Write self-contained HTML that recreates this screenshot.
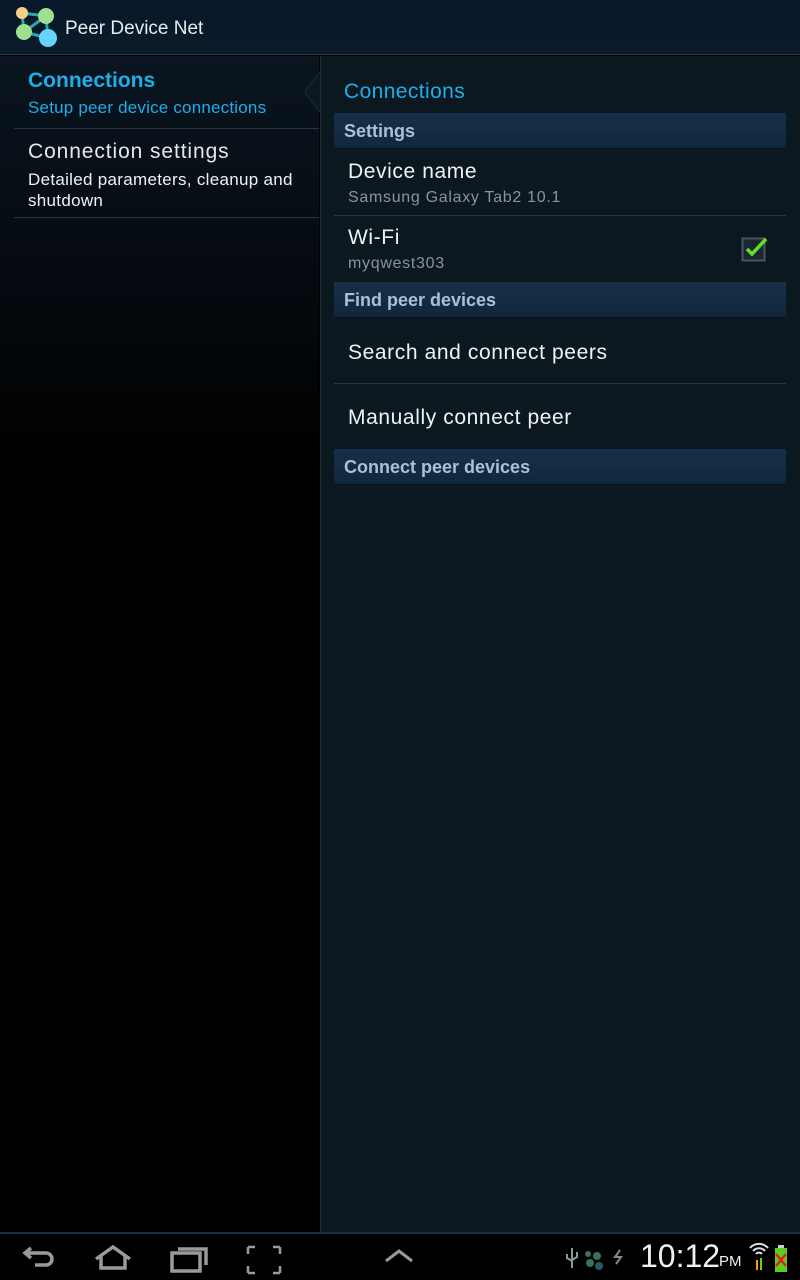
<!DOCTYPE html>
<html><head><meta charset="utf-8"><style>
*{margin:0;padding:0;box-sizing:border-box}
body{width:800px;height:1280px;background:#000;font-family:"Liberation Sans",Roboto,sans-serif;position:relative;overflow:hidden}
.abs{position:absolute}
#top{left:0;top:0;width:800px;height:55px;background:linear-gradient(#06182a,#0a1a28);border-bottom:1px solid #2a3a48}
#left{left:0;top:56px;width:319px;height:1176px;background:linear-gradient(#0a1520 0,#050a10 220px,#000 400px)}
#right{left:320px;top:56px;width:480px;height:1176px;background:#0b1820;border-left:1px solid #1f2c36}
.t{position:absolute;white-space:nowrap}
.r{letter-spacing:0.6px}
.s{letter-spacing:0.7px}
.hdr{position:absolute;left:334px;width:452px;height:36px;background:linear-gradient(#163049,#10273b);border-bottom:1px solid #081018}
.hdr span{position:absolute;left:10px;top:8px;font-size:18px;font-weight:bold;color:#a9c0d6}
.sep{position:absolute;height:1px;background:#26353f}
#nav{left:0;top:1232px;width:800px;height:48px;background:#000;border-top:2px solid #12303f}
</style></head><body>
<div id="top" class="abs">
<svg class="abs" style="left:14px;top:5px" width="46" height="44" viewBox="0 0 46 44">
<g stroke="#2aa8b0" stroke-width="3"><line x1="8" y1="8" x2="32" y2="11"/><line x1="8" y1="8" x2="10" y2="27"/><line x1="10" y1="27" x2="32" y2="11"/><line x1="32" y1="11" x2="34" y2="33"/><line x1="10" y1="27" x2="34" y2="33"/></g>
<circle cx="8" cy="8" r="6" fill="#f4d08a"/><circle cx="32" cy="11" r="8" fill="#9ee08e"/><circle cx="10" cy="27" r="8" fill="#9ee08e"/><circle cx="34" cy="33" r="9" fill="#66d4fa"/></svg>
<div class="t" style="left:65px;top:18px;font-size:19px;color:#e6ecf0">Peer Device Net</div>
</div>
<div id="left" class="abs">
<div class="t" style="left:28px;top:13px;font-size:21px;font-weight:bold;color:#1eaee8">Connections</div>
<div class="t" style="left:28px;top:42px;font-size:17px;color:#1eaee8;letter-spacing:0.2px">Setup peer device connections</div>
<div class="sep" style="left:14px;top:72px;width:305px"></div>
<div class="t r" style="left:28px;top:84px;font-size:21px;color:#e4e8ea;letter-spacing:0.9px">Connection settings</div>
<div class="t" style="left:28px;top:113px;font-size:17px;color:#f0f2f4;line-height:21px;letter-spacing:0.3px">Detailed parameters, cleanup and<br>shutdown</div>
<div class="sep" style="left:14px;top:161px;width:305px"></div>
</div>
<svg class="abs" style="left:304px;top:72px" width="18" height="40"><polygon points="17,0 17,40 16,40 2,22 2,18 16,0" fill="#0b1820" stroke="#1f2c36"/></svg>
<div id="right" class="abs"></div>
<div class="t" style="left:344px;top:80px;font-size:21px;color:#1eaee8;letter-spacing:0.4px">Connections</div>
<div class="hdr" style="top:113px"><span>Settings</span></div>
<div class="t r" style="left:348px;top:160px;font-size:21px;color:#f0f2f4">Device name</div>
<div class="t s" style="left:348px;top:189px;font-size:16px;color:#8a949a">Samsung Galaxy Tab2 10.1</div>
<div class="sep" style="left:334px;top:215px;width:452px"></div>
<div class="t r" style="left:348px;top:226px;font-size:21px;color:#f0f2f4">Wi-Fi</div>
<div class="t s" style="left:348px;top:255px;font-size:16px;color:#8a949a">myqwest303</div>
<svg class="abs" style="left:741px;top:235px" width="28" height="28"><rect x="1.5" y="3.5" width="22" height="22" fill="#1a2630" stroke="#4a565e" stroke-width="2"/><path d="M6 14 L11 19 L25 4" fill="none" stroke="#5ee024" stroke-width="3.5"/></svg>
<div class="hdr" style="top:282px"><span>Find peer devices</span></div>
<div class="t r" style="left:348px;top:341px;font-size:21px;color:#f0f2f4">Search and connect peers</div>
<div class="sep" style="left:334px;top:383px;width:452px"></div>
<div class="t r" style="left:348px;top:406px;font-size:21px;color:#f0f2f4">Manually connect peer</div>
<div class="hdr" style="top:449px"><span>Connect peer devices</span></div>
<div id="nav" class="abs">
<svg class="abs" style="left:20px;top:6px" width="300" height="36" fill="none" stroke="#9a9a9a" stroke-width="3.5">
<path d="M11 8 L5 13 L11 18 M5 13 H26 a6 6 0 0 1 0 12 H15"/>
<path d="M76 19 L93 7 L110 19 M81 16 V28 H105 V16" />
<rect x="152" y="13" width="28" height="18"/><path d="M158 9 H186 V25"/>
<path d="M228 7 h7 M228 7 v7 M260 7 h-7 M260 7 v7 M228 33 h7 M228 33 v-7 M260 33 h-7 M260 33 v-7" stroke-width="2.5"/>
</svg>
<svg class="abs" style="left:383px;top:14px" width="32" height="16"><path d="M3 13 L16 3 L29 13" fill="none" stroke="#9a9a9a" stroke-width="3"/></svg>
<svg class="abs" style="left:562px;top:10px" width="70" height="30"><path d="M10 4 V24 M5 10 v4 l5 3 M15 8 v5 l-5 3" stroke="#8a9a9a" stroke-width="2" fill="none"/><circle cx="26" cy="10" r="3" fill="#3a7060"/><circle cx="35" cy="12" r="4" fill="#3a7060"/><circle cx="28" cy="19" r="4" fill="#3a7060"/><circle cx="37" cy="22" r="4" fill="#2a5a6a"/><path d="M58 6 l-5 7 h6 l-5 7" stroke="#888" stroke-width="2" fill="none"/></svg>
<div class="t" style="left:640px;top:4px;font-size:32px;color:#f0f0f0">10:12</div>
<div class="t" style="left:719px;top:19px;font-size:15px;color:#f0f0f0">PM</div>
<svg class="abs" style="left:747px;top:4px" width="46" height="36"><path d="M3 10 a12 12 0 0 1 18 0 M6 13 a8 8 0 0 1 12 0 M9 16 a4 4 0 0 1 6 0" stroke="#ddd" stroke-width="2" fill="none"/><path d="M10 22 v10 M14 32 v-10" stroke="#f0a020" stroke-width="2"/><path d="M14 20 v10" stroke="#60d030" stroke-width="2"/><rect x="28" y="10" width="12" height="24" fill="#5ccc20"/><rect x="31" y="7" width="6" height="3" fill="#ccc"/><path d="M29 16 L39 28 M39 16 L29 28" stroke="#e02020" stroke-width="2.5"/></svg>
</div>
</body></html>
